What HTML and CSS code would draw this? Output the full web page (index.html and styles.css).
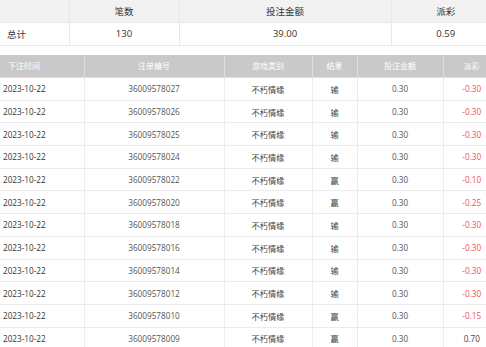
FILE: index.html
```html
<!DOCTYPE html>
<html lang="zh-CN">
<head>
    <meta charset="UTF-8">
    <meta name="viewport" content="width=device-width, initial-scale=1.0">
    <title>投注记录</title>
    <link rel="stylesheet" href="styles.css">
</head>
<body>
    <div class="page">
        <table class="summary">
            <colgroup>
                <col style="width: 69px">
                <col style="width: 110px">
                <col style="width: 212px">
                <col>
            </colgroup>
            <thead>
                <tr>
                    <th></th>
                    <th>笔数</th>
                    <th>投注金额</th>
                    <th>派彩</th>
                </tr>
            </thead>
            <tbody>
                <tr>
                    <td class="label">总计</td>
                    <td>130</td>
                    <td>39.00</td>
                    <td>0.59</td>
                </tr>
            </tbody>
        </table>

        <table class="records">
            <colgroup>
                <col style="width: 84px">
                <col style="width: 140px">
                <col style="width: 88px">
                <col style="width: 45px">
                <col style="width: 86px">
                <col>
            </colgroup>
            <thead>
                <tr>
                    <th class="first">下注时间</th>
                    <th>注单编号</th>
                    <th>游戏类别</th>
                    <th>结果</th>
                    <th>投注金额</th>
                    <th>派彩</th>
                </tr>
            </thead>
            <tbody id="rows"></tbody>
        </table>
    </div>

    <script>
        const records = [
            ['36009578027', '输', '-0.30'],
            ['36009578026', '输', '-0.30'],
            ['36009578025', '输', '-0.30'],
            ['36009578024', '输', '-0.30'],
            ['36009578022', '赢', '-0.10'],
            ['36009578020', '赢', '-0.25'],
            ['36009578018', '输', '-0.30'],
            ['36009578016', '输', '-0.30'],
            ['36009578014', '输', '-0.30'],
            ['36009578012', '输', '-0.30'],
            ['36009578010', '赢', '-0.15'],
            ['36009578009', '赢', '0.70']
        ];

        const tbody = document.getElementById('rows');
        records.forEach(([id, result, payout]) => {
            const tr = document.createElement('tr');
            const cls = payout.startsWith('-') ? 'payout loss' : 'payout';
            tr.innerHTML =
                '<td class="date">2023-10-22</td>' +
                '<td class="muted">' + id + '</td>' +
                '<td>不朽情缘</td>' +
                '<td>' + result + '</td>' +
                '<td class="muted">0.30</td>' +
                '<td class="' + cls + '">' + payout + '</td>';
            tbody.appendChild(tr);
        });
    </script>
</body>
</html>
```

FILE: styles.css
```css
* {
    margin: 0;
    padding: 0;
    box-sizing: border-box;
}

body {
    font-family: 'Open Sans', 'Noto Sans CJK SC', sans-serif;
    background-color: #fff;
    color: #333;
    overflow: hidden;
}

.page {
    width: 501px;
}

table {
    width: 501px;
    border-collapse: collapse;
    table-layout: fixed;
}

/* summary block */
.summary th,
.summary td {
    border: 1px solid #e8e8e8;
    font-size: 9.5px;
    font-weight: normal;
    text-align: center;
    color: #333;
}

.summary thead tr {
    height: 22px;
    background-color: #f2f2f2;
}

.summary tbody tr {
    height: 23px;
}

.summary .label {
    text-align: left;
    padding-left: 7px;
}

.summary tr > :first-child {
    border-left: none;
}

.summary thead th {
    border-top: none;
}

/* record list */
.records {
    margin-top: 9px;
}

.records th {
    background-color: #c9c9c9;
    color: #fff;
    font-size: 8px;
    font-weight: normal;
    height: 23px;
    border: 1px solid #dedede;
    border-top: none;
}

.records th.first {
    text-align: left;
    padding-left: 8px;
}

.records td {
    height: 22.7px;
    font-size: 8.2px;
    text-align: center;
    color: #444;
    border: 1px solid #ececec;
    white-space: nowrap;
}

.records tr > :first-child {
    border-left: none;
}

.records td.date {
    text-align: left;
    padding-left: 3px;
    color: #333;
}

.records td.muted {
    color: #555;
}

.records td.payout {
    color: #444;
}

.records td.loss {
    color: #ec5068;
}
```
